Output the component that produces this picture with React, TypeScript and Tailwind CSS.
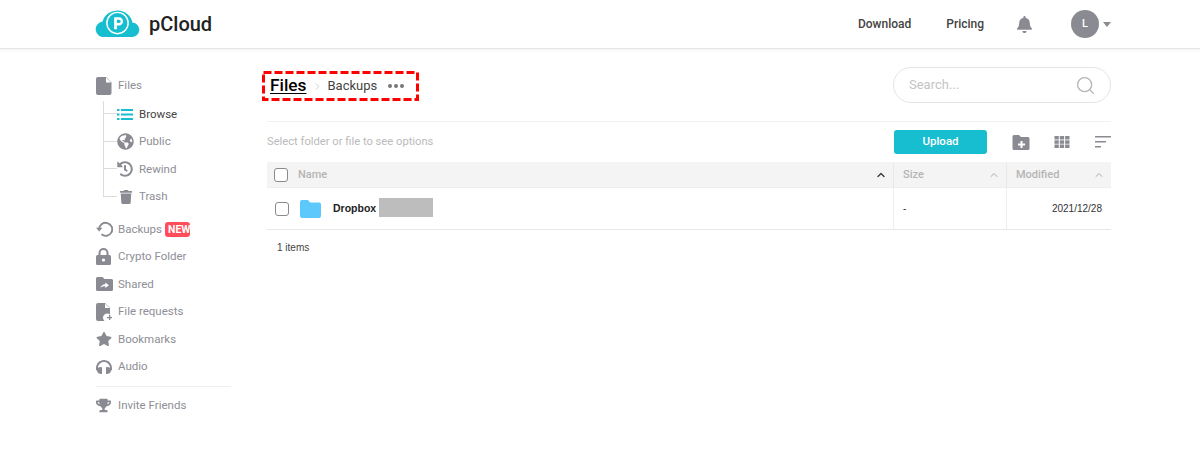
import { ChevronUp, ChevronRight, Search } from 'lucide-react'
import { FaBell, FaGlobeAmericas, FaHeadphones, FaHistory, FaStar, FaTrash, FaTrophy } from 'react-icons/fa'
import type { ReactNode } from 'react'

const GREY = '#8a8a92'

const FileIcon = () => (
  <svg width="16" height="18" viewBox="0 0 16 18"><path d="M2 0h8l5.500 5.500V16a2 2 0 0 1-2 2H2a2 2 0 0 1-2-2V2a2 2 0 0 1 2-2z" fill={GREY} /><path d="M10 0.500V5.500h5.200z" fill="#fff" /></svg>
)
const BrowseIcon = () => (
  <svg width="16" height="11" viewBox="0 0 16 11" fill="#17bed0"><rect x="0" y="0" width="2.500" height="2" /><rect x="0" y="4.500" width="2.500" height="2" /><rect x="0" y="9" width="2.500" height="2" /><rect x="4" y="0" width="12" height="2" /><rect x="4" y="4.500" width="12" height="2" /><rect x="4" y="9" width="12" height="2" /></svg>
)
const BackupIcon = () => (
  <svg width="17" height="16" viewBox="0 0 17 16" fill="none">
    <path d="M3.200 8A6.500 6.500 0 1 1 5.500 13.300" stroke={GREY} strokeWidth="1.900" />
    <path d="M0 6.800h6.400L3.200 10.600z" fill={GREY} />
  </svg>
)
const LockIcon = () => (
  <svg width="15" height="17" viewBox="0 0 15 17">
    <path d="M3.500 8V5a4 4 0 0 1 8 0v3" fill="none" stroke={GREY} strokeWidth="2" />
    <rect x="0" y="7" width="15" height="10" rx="1.500" fill={GREY} />
    <circle cx="7.500" cy="12" r="1.600" fill="#fff" />
  </svg>
)
const SharedIcon = () => (
  <svg width="17" height="14" viewBox="0 0 17 14"><path d="M1.500 0h5l2 2h7A1.500 1.500 0 0 1 17 3.500v9a1.500 1.500 0 0 1-1.500 1.500h-14A1.500 1.500 0 0 1 0 12.500v-11A1.500 1.500 0 0 1 1.500 0z" fill={GREY} /><path d="M4.500 10.800c.6-2.300 2.300-3.500 4.800-3.500V5.400L13 8.200l-3.700 2.800V9.300c-2 0-3.500.4-4.800 1.500z" fill="#fff" /></svg>
)
const RequestIcon = () => (
  <svg width="16" height="18" viewBox="0 0 16 18"><path d="M2 0h7l5 5v6.500a4 4 0 0 0-5.500 6.500H2a2 2 0 0 1-2-2V2a2 2 0 0 1 2-2z" fill={GREY} /><path d="M9 .5V5h4.600z" fill="#fff" /><path d="M11 14h2v-2h1.300v2h1.700v1.300h-1.700V17H13v-1.700h-2z" fill={GREY} /></svg>
)
const CloudLogo = () => (
  <svg width="45" height="29" viewBox="0 0 45 30" className="-mt-[2px]">
    <path d="M9 29a8 8 0 0 1-2-16 16 16 0 0 1 31 1 7.500 7.500 0 0 1-1 15z" fill="#17bed0" />
    <circle cx="22.500" cy="14.500" r="11" fill="none" stroke="#fff" strokeWidth="1.500" />
    <path d="M19 21V8.500h5a4.300 4.300 0 0 1 0 8.600h-2V21z M22 11v3.600h2a1.800 1.800 0 0 0 0-3.600z" fill="#fff" fillRule="evenodd" />
  </svg>
)

const subItems: { label: string; icon: ReactNode; active?: boolean }[] = [
  { label: 'Browse', icon: <BrowseIcon />, active: true },
  { label: 'Public', icon: <FaGlobeAmericas size={17} color={GREY} /> },
  { label: 'Rewind', icon: <FaHistory size={16} color={GREY} /> },
  { label: 'Trash', icon: <span className="pl-[2px]"><FaTrash size={14} color={GREY} /></span> },
]

const mainItems: { label: string; icon: ReactNode; badge?: boolean }[] = [
  { label: 'Backups', icon: <BackupIcon />, badge: true },
  { label: 'Crypto Folder', icon: <LockIcon /> },
  { label: 'Shared', icon: <SharedIcon /> },
  { label: 'File requests', icon: <RequestIcon /> },
  { label: 'Bookmarks', icon: <FaStar size={16} color={GREY} /> },
  { label: 'Audio', icon: <FaHeadphones size={16} color={GREY} /> },
]

function SideRow({ icon, label, children }: { icon: ReactNode; label: string; children?: ReactNode }) {
  return (
    <div className="flex items-center h-[27.5px] text-[11.5px] text-[#8e8e96]">
      <span className="w-[22px] flex justify-start">{icon}</span>
      <span>{label}</span>
      {children}
    </div>
  )
}

function Checkbox() {
  return <span className="block w-[14px] h-[14px] border border-[#8a8a8a] rounded-[3px] bg-white" />
}

export default function App() {
  return (
    <div className="min-h-[461px] bg-white font-['Roboto',sans-serif]">
      {/* Header */}
      <header className="h-[49px] border-b border-[#e6e6e6] shadow-[0_1px_3px_rgba(0,0,0,0.06)] flex items-center pl-[95px] pr-[89px]">
        <div className="flex items-center gap-[9px]">
          <CloudLogo />
          <span className="text-[20px] font-medium text-[#222] leading-none">pCloud</span>
        </div>
        <div className="ml-auto flex items-center text-[12px] font-medium text-[#444]">
          <span>Download</span>
          <span className="ml-[35px]">Pricing</span>
          <FaBell size={17} className="ml-[32px]" color={GREY} />
          <span className="ml-[38px] w-[28px] h-[28px] rounded-full bg-[#8a8a92] text-white flex items-center justify-center text-[11px]">L</span>
          <span className="ml-[4px] w-0 h-0 border-x-[4px] border-x-transparent border-t-[5px] border-t-[#8a8a92]" />
        </div>
      </header>

      <div className="flex pl-[96px] pr-[89px]">
        {/* Sidebar */}
        <aside className="w-[135px] pt-[23px] shrink-0">
          <SideRow icon={<FileIcon />} label="Files" />
          <div className="pl-[7px] pt-[1px]">
            {subItems.map((s, i) => (
              <div key={s.label} className="flex items-center h-[27.5px] text-[11.5px] text-[#8e8e96]">
                <span className="w-[14px] h-full flex flex-col shrink-0">
                  <span className="h-1/2 border-l border-b border-[#dcdcdc]" />
                  {i < subItems.length - 1 && <span className="h-1/2 border-l border-[#dcdcdc]" />}
                </span>
                <span className="w-[22px] flex justify-start">{s.icon}</span>
                <span className={s.active ? 'text-[#444]' : ''}>{s.label}</span>
              </div>
            ))}
          </div>
          <div className="mt-[5px]">
            {mainItems.map(m => (
              <SideRow key={m.label} icon={m.icon} label={m.label}>
                {m.badge && <span className="ml-[3px] w-[25px] h-[15px] overflow-hidden rounded-[3px] bg-[#ff4d5a] text-white text-[10.5px] font-bold leading-[15px] pl-[3px] whitespace-nowrap">NEW</span>}
              </SideRow>
            ))}
          </div>
          <div className="border-t border-[#eeeeee] mt-[5px] pt-[5px]">
            <SideRow icon={<FaTrophy size={15} color={GREY} />} label="Invite Friends" />
          </div>
        </aside>

        {/* Main */}
        <main className="flex-1 ml-[36px]">
          <div className="h-[72px] flex items-start justify-between pt-[18px]">
            <div className="relative -ml-[5px] mt-[4px] w-[157px] h-[30px] flex items-center pl-[8px]">
              <svg width="157" height="30" className="absolute inset-0" fill="none">
                <rect x="1.500" y="1.500" width="154" height="27" stroke="#ff0000" strokeWidth="3" strokeDasharray="8 3" />
              </svg>
              <span className="text-[17.3px] font-medium text-black underline underline-offset-2">Files</span>
              <ChevronRight size={11} color="#cccccc" className="ml-[6px]" />
              <span className="ml-[4px] text-[13px] text-[#444]">Backups</span>
              <span className="ml-[11px] flex gap-[2.5px]">
                <i className="block w-[3.5px] h-[3.5px] rounded-full bg-[#777]" />
                <i className="block w-[3.5px] h-[3.5px] rounded-full bg-[#777]" />
                <i className="block w-[3.5px] h-[3.5px] rounded-full bg-[#777]" />
              </span>
            </div>
            <div className="w-[218px] h-[36px] rounded-full border border-[#e4e4e4] flex items-center justify-between pl-[15px] pr-[14px]">
              <span className="text-[13px] text-[#c4c4c4]">Search...</span>
              <Search size={21} strokeWidth={1.5} color="#b5b5b5" />
            </div>
          </div>

          <div className="h-[41px] border-t border-[#f2f2f2] flex items-center">
            <span className="text-[11.2px] text-[#bbbbbb]">Select folder or file to see options</span>
            <span className="ml-auto w-[93px] h-[24px] rounded-[3px] bg-[#17bed0] text-white text-[11.5px] font-medium flex items-center justify-center">Upload</span>
            <span className="ml-[25px] w-[18px]">
              <svg width="18" height="15" viewBox="0 0 17 15"><path d="M1.500 0h5l2 2h7A1.500 1.500 0 0 1 17 3.500v10a1.500 1.500 0 0 1-1.500 1.500h-14A1.500 1.500 0 0 1 0 13.500v-12A1.500 1.500 0 0 1 1.500 0z" fill={GREY} /><path d="M8 6h2v2.500h2.500v2H10V13H8v-2.500H5.500v-2H8z" fill="#fff" /></svg>
            </span>
            <span className="ml-[24px] w-[16px]">
              <svg width="16" height="12" viewBox="0 0 15 12" fill={GREY}><rect width="4.300" height="3.500" /><rect x="5.300" width="4.300" height="3.500" /><rect x="10.600" width="4.400" height="3.500" /><rect y="4.300" width="4.300" height="3.500" /><rect x="5.300" y="4.300" width="4.300" height="3.500" /><rect x="10.600" y="4.300" width="4.400" height="3.500" /><rect y="8.500" width="4.300" height="3.500" /><rect x="5.300" y="8.500" width="4.300" height="3.500" /><rect x="10.600" y="8.500" width="4.400" height="3.500" /></svg>
            </span>
            <span className="ml-[25px] w-[16px]">
              <svg width="16" height="12" viewBox="0 0 16 12" fill={GREY}><rect width="16" height="1.500" /><rect y="5" width="11" height="1.500" /><rect y="10" width="6" height="1.500" /></svg>
            </span>
          </div>

          {/* Table */}
          <div className="flex h-[26px] pt-[1px] bg-[#f4f4f4] border-b border-[#eeeeee] text-[11px] font-medium text-[#b5b5b5]">
            <div className="w-[627px] flex items-center pl-[7px] pr-[6px] border-r border-[#e8e8e8]">
              <Checkbox />
              <span className="ml-[10px]">Name</span>
              <ChevronUp size={12} strokeWidth={2.5} color="#333" className="ml-auto" />
            </div>
            <div className="w-[113px] flex items-center pl-[9px] pr-[6px] border-r border-[#e8e8e8]">
              <span>Size</span>
              <ChevronUp size={12} color="#aaa" className="ml-auto" />
            </div>
            <div className="flex-1 flex items-center pl-[9px] pr-[6px]">
              <span>Modified</span>
              <ChevronUp size={12} color="#aaa" className="ml-auto" />
            </div>
          </div>
          <div className="flex h-[42px] border-b border-[#e8e8e8] font-['Liberation_Sans',sans-serif] text-[10px] text-[#333]">
            <div className="w-[627px] flex items-center pl-[8px] border-r border-[#eeeeee]">
              <Checkbox />
              <svg width="21" height="18" viewBox="0 0 21 18" className="ml-[11px]"><path d="M2 0h6l2 2.500h9a2 2 0 0 1 2 2V16a2 2 0 0 1-2 2H2a2 2 0 0 1-2-2V2a2 2 0 0 1 2-2z" fill="#5cc8fb" /></svg>
              <span className="ml-[12px] text-[10.5px] font-bold text-[#222]">Dropbox</span>
              <span className="ml-[3px] w-[54px] h-[19px] -mt-[3px] bg-[#bdbdbd]" />
            </div>
            <div className="w-[113px] flex items-center pl-[9px] border-r border-[#eeeeee]">-</div>
            <div className="flex-1 flex items-center justify-end pr-[9px]">2021/12/28</div>
          </div>
          <p className="pl-[10px] pt-[10px] font-['Liberation_Sans',sans-serif] text-[10px] text-[#444]">1 items</p>
        </main>
      </div>
    </div>
  )
}
